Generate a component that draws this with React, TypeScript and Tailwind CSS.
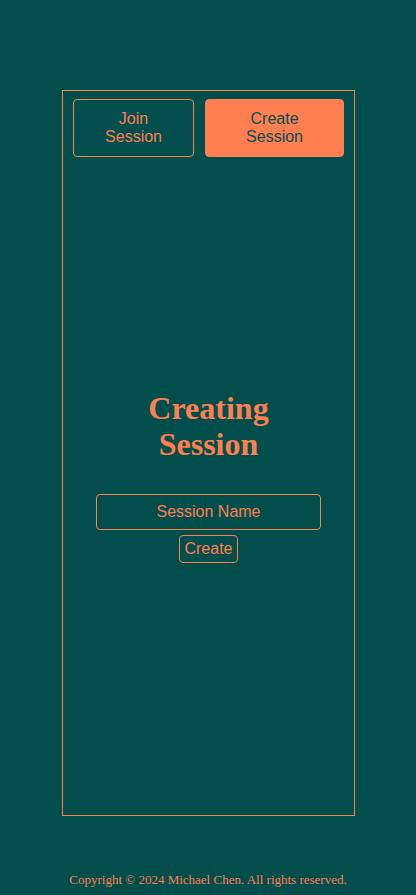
import * as React from "react";

const App: React.FC = () => {
  const [mode, setMode] = React.useState<"join" | "create">("create");
  const [name, setName] = React.useState<string>("");

  return (
    <div className="min-h-[895px] bg-[#024e4c] flex flex-col items-center">
      <div className="mt-[90px] ml-[1px] w-[293px] h-[726px] border border-[#ff7f50] flex flex-col px-[10px] pt-[8px]">
        <div className="flex gap-[11px]">
          <button
            onClick={() => setMode("join")}
            className={
              mode === "join"
                ? "w-[122px] h-[58px] rounded-[4px] border border-[#ff7f50] bg-[#ff7f50] text-[#024e4c] text-base leading-[18px] font-['Liberation_Sans',Arial,sans-serif]"
                : "w-[122px] h-[58px] rounded-[4px] border border-[#ff7f50] text-[#ff7f50] text-base leading-[18px] font-['Liberation_Sans',Arial,sans-serif]"
            }
          >
            Join
            <br />
            Session
          </button>
          <button
            onClick={() => setMode("create")}
            className={
              mode === "create"
                ? "w-[140px] h-[58px] rounded-[4px] border border-[#ff7f50] bg-[#ff7f50] text-[#024e4c] text-base leading-[18px] font-['Liberation_Sans',Arial,sans-serif]"
                : "w-[140px] h-[58px] rounded-[4px] border border-[#ff7f50] text-[#ff7f50] text-base leading-[18px] font-['Liberation_Sans',Arial,sans-serif]"
            }
          >
            Create
            <br />
            Session
          </button>
        </div>

        <div className="flex flex-col items-center pt-[233px]">
          <h1 className="text-[32px] leading-[36px] font-bold text-center text-[#ff7f50] font-['Liberation_Serif','Times_New_Roman',serif]">
            Creating
            <br />
            Session
          </h1>
          <input
            value={name}
            onChange={(e) => setName(e?.target?.value)}
            placeholder="Session Name"
            className="mt-[32px] w-[225px] h-[36px] rounded-[4px] border border-[#ff7f50] bg-transparent text-center text-base text-[#ff7f50] placeholder:text-[#ff7f50] outline-none font-['Liberation_Sans',Arial,sans-serif]"
          />
          <button className="mt-[5px] h-[28px] px-[4px] rounded-[4px] border border-[#ff7f50] text-base leading-none text-[#ff7f50] font-['Liberation_Sans',Arial,sans-serif]">
            Create
          </button>
        </div>
      </div>

      <footer className="mt-[54px] text-[13px] text-[#ff7f50] text-center font-['Liberation_Serif','Times_New_Roman',serif]">
        Copyright © 2024 Michael Chen. All rights reserved.
      </footer>
    </div>
  );
};

export default App;
